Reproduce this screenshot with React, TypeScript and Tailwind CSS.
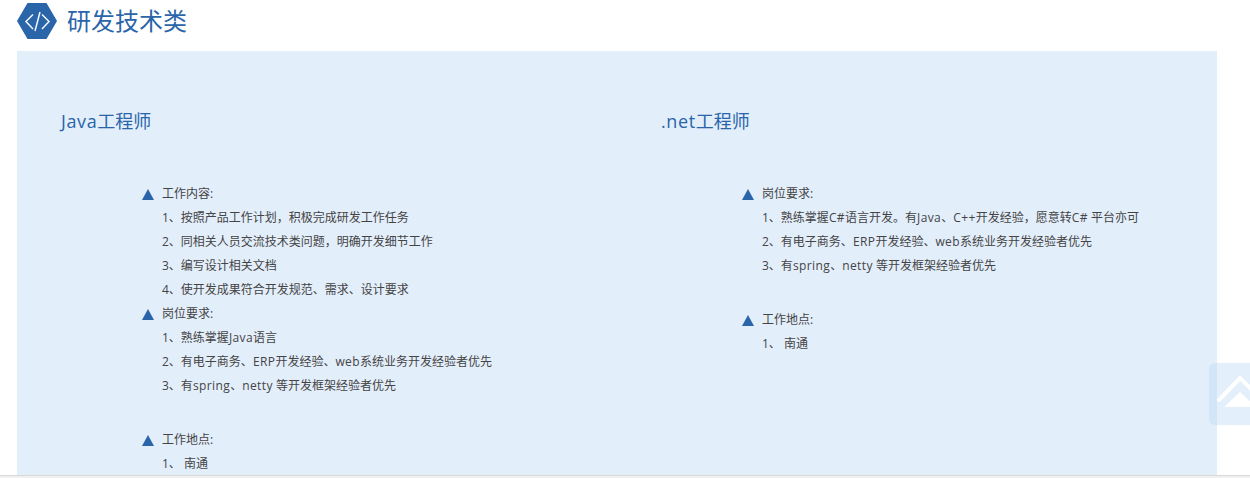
import React from "react";

interface JobSection {
  title: string;
  lines: string[];
  gapBefore?: boolean;
}

interface Job {
  name: string;
  sections: JobSection[];
}

const jobs: Job[] = [
  {
    name: "Java工程师",
    sections: [
      {
        title: "工作内容:",
        lines: [
          "1、按照产品工作计划，积极完成研发工作任务",
          "2、同相关人员交流技术类问题，明确开发细节工作",
          "3、编写设计相关文档",
          "4、使开发成果符合开发规范、需求、设计要求",
        ],
      },
      {
        title: "岗位要求:",
        lines: [
          "1、熟练掌握Java语言",
          "2、有电子商务、ERP开发经验、web系统业务开发经验者优先",
          "3、有spring、netty 等开发框架经验者优先",
        ],
      },
      { title: "工作地点:", lines: ["1、 南通"], gapBefore: true },
    ],
  },
  {
    name: ".net工程师",
    sections: [
      {
        title: "岗位要求:",
        lines: [
          "1、熟练掌握C#语言开发。有Java、C++开发经验，愿意转C# 平台亦可",
          "2、有电子商务、ERP开发经验、web系统业务开发经验者优先",
          "3、有spring、netty 等开发框架经验者优先",
        ],
      },
      { title: "工作地点:", lines: ["1、 南通"], gapBefore: true },
    ],
  },
];

// latin runs are a bit wider than the installed font gives
function Spaced({ text, className }: { text: string; className: string }) {
  return (
    <>
      {text.split(/([A-Za-z#+.]+)/).map((part, i) =>
        i % 2 === 1 ? (
          <span key={i} className={className}>
            {part}
          </span>
        ) : (
          part
        ),
      )}
    </>
  );
}

function Section({ title, lines, gapBefore }: JobSection) {
  return (
    <div className={gapBefore ? "mt-[30px]" : ""}>
      <div className="flex items-center h-6">
        <svg width="12" height="11" viewBox="0 0 12 11" className="mr-2 shrink-0">
          <path d="M6 0L12 11H0Z" fill="#2a65a9" />
        </svg>
        <span>{title}</span>
      </div>
      {lines.map((line) => (
        <p key={line} className="pl-5 h-6 whitespace-nowrap">
          <Spaced text={line} className="tracking-[0.4px]" />
        </p>
      ))}
    </div>
  );
}

export default function App() {
  return (
    <div
      className="relative flex flex-col h-[478px] overflow-hidden bg-white"
      style={{ fontFamily: '"Open Sans", "Noto Sans CJK SC", sans-serif' }}
    >
      <div className="flex-1 min-h-0 overflow-hidden pl-[17px]">
        <div className="flex items-center h-[42px] w-[1200px] gap-[10px]">
          <svg width="40" height="36" viewBox="0 0 40 36" className="shrink-0">
            <path d="M10.5 0H29.5L40 18L29.5 36H10.5L0 18Z" fill="#2a65a9" />
            <path
              d="M16 11.5L9 18.5L16 26M25 11.5L32 18.5L25 26M23 9L18 28"
              fill="none"
              stroke="#f2f6fb"
              strokeWidth="1.5"
            />
          </svg>
          <h2 className="text-2xl leading-none text-[#2a65a9]">研发技术类</h2>
        </div>
        <div className="mt-[9px] w-[1200px] h-[500px] bg-[#e3eefb] flex">
          {jobs.map((job) => (
            <div key={job.name} className="w-[600px] pt-[56px] pl-[44px]">
              <h3 className="text-lg leading-7 text-[#2a65a9]">
                <Spaced text={job.name} className="tracking-[0.6px]" />
              </h3>
              <div className="mt-[47px] pl-[81px] text-xs leading-6 text-[#444444]">
                {job.sections.map((section) => (
                  <Section key={section.title} {...section} />
                ))}
              </div>
            </div>
          ))}
        </div>
      </div>
      <div className="h-[3px] shrink-0 bg-[#f0f0f0] border-t border-[#d9d9d9]" />
      <div className="absolute left-[1209px] top-[363px] w-[60px] h-[62px] rounded-md bg-[#bcd6f7]/40 overflow-hidden">
        <svg width="41" height="62" viewBox="0 0 41 62">
          <path d="M10 37L31 15L53 37" fill="none" stroke="#ffffff" strokeWidth="4" strokeLinecap="round" />
          <path d="M15 44L31 29L47 44Z" fill="#ffffff" />
        </svg>
      </div>
    </div>
  );
}
